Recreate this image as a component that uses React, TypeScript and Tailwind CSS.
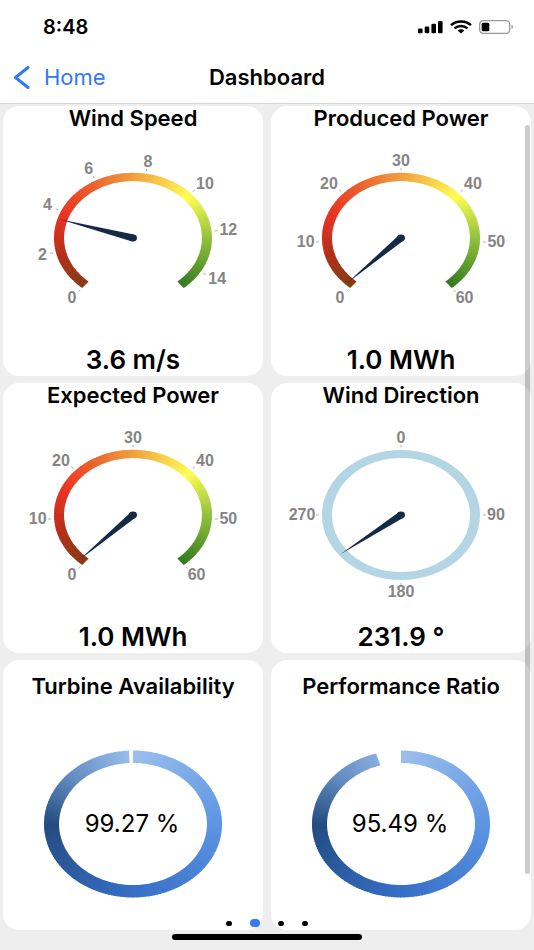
import React, { useState } from "react";

type Stop = [number, string];

// Dials are slightly wider than they are tall
const SQUASH = 0.825;

const windStops: Stop[] = [
  [0, "#863c14"],
  [0.12, "#b32f1a"],
  [0.26, "#ea3323"],
  [0.38, "#ec5f2c"],
  [0.5, "#f09f3e"],
  [0.67, "#fffe54"],
  [0.82, "#92c23c"],
  [1, "#32791f"],
];

const donutStops: Stop[] = [
  [0, "#9bbfee"],
  [0.25, "#5c95e2"],
  [0.5, "#366fc6"],
  [0.75, "#234c80"],
  [0.87, "#648dc2"],
  [1, "#9bbfee"],
];

const toRad = (deg: number) => (deg * Math.PI) / 180;

const point = (cx: number, cy: number, r: number, deg: number) => {
  const a = toRad(deg);
  return [cx + r * Math.sin(a), cy - r * Math.cos(a) * SQUASH];
};

const mix = (stops: Stop[], t: number) => {
  let i = 1;
  while (i < stops.length - 1 && stops[i][0] < t) i++;
  const [t0, c0] = stops[i - 1];
  const [t1, c1] = stops[i];
  const k = Math.min(1, Math.max(0, (t - t0) / (t1 - t0)));
  const channel = (c: string, n: number) => parseInt(c.slice(1 + n * 2, 3 + n * 2), 16);
  const rgb = [0, 1, 2].map((n) => Math.round(channel(c0, n) + (channel(c1, n) - channel(c0, n)) * k));
  return `rgb(${rgb.join(",")})`;
};

const slice = (cx: number, cy: number, inner: number, outer: number, from: number, to: number) => {
  const pts = [
    point(cx, cy, outer, from),
    point(cx, cy, outer, to),
    point(cx, cy, inner, to),
    point(cx, cy, inner, from),
  ];
  return `M${pts.map((p) => p.map((n) => n.toFixed(2)).join(" ")).join("L")}Z`;
};

type BandProps = {
  cx: number;
  cy: number;
  inner: number;
  outer: number;
  from: number;
  to: number;
  stops: Stop[];
  span: number;
};

// Arc built from thin slices so the colour can follow the angle
function Band({ cx, cy, inner, outer, from, to, stops, span }: BandProps) {
  const count = Math.ceil((to - from) / 2);
  const step = (to - from) / count;
  return (
    <g>
      {Array.from({ length: count }, (_, i) => {
        const a = from + i * step;
        const b = Math.min(to, a + step + 0.6);
        return (
          <path key={i} d={slice(cx, cy, inner, outer, a, b)} fill={mix(stops, (a + step / 2 - from) / span)} />
        );
      })}
    </g>
  );
}

type GaugeProps = {
  title: string;
  value: number;
  unit: string;
  max: number;
  ticks: number[];
  compass?: boolean;
};

function GaugeCard({ title, value, unit, max, ticks, compass }: GaugeProps) {
  const cx = 130;
  const cy = 108;
  const start = compass ? 0 : -140;
  const sweep = compass ? 360 : 280;
  const angle = (v: number) => start + (v / max) * sweep;

  const needle = angle(value);
  const [tx, ty] = point(cx, cy, 77, needle);
  const len = Math.hypot(tx - cx, ty - cy);
  const nx = (-(ty - cy) / len) * 3.5;
  const ny = ((tx - cx) / len) * 3.5;

  return (
    <section className="overflow-hidden rounded-2xl bg-white text-center">
      <h2 className="text-[22px] leading-6 font-semibold whitespace-nowrap">{title}</h2>
      <svg viewBox="0 0 260 214" className="block w-full" role="img" aria-label={title}>
        {compass ? (
          <path
            d="M51 108a79 65 0 1 0 158 0a79 65 0 1 0-158 0ZM61 108a69 57 0 1 0 138 0a69 57 0 1 0-138 0Z"
            fill="#b4d6e4"
            fillRule="evenodd"
          />
        ) : (
          <Band cx={cx} cy={cy} inner={69} outer={79} from={-140} to={140} stops={windStops} span={280} />
        )}
        {ticks.map((t) => {
          const a = angle(t);
          const [x1, y1] = point(cx, cy, 82, a);
          const [x2, y2] = point(cx, cy, 85, a);
          // diagonal labels need a little more room than the ones on the axes
          const corner = 4 * Math.abs(Math.sin(toRad(2 * a)));
          const [lx] = point(cx, cy, 87 + corner + String(t).length * 4, a);
          const [, ly] = point(cx, cy, 93 + corner / 2, a);
          return (
            <g key={t}>
              <line x1={x1} y1={y1} x2={x2} y2={y2} stroke="#b0b0b0" strokeWidth="1" />
              <text
                x={lx}
                y={ly + 5}
                textAnchor="middle"
                fill="#858585"
                className="font-['Liberation_Sans',sans-serif] text-base font-bold"
              >
                {t}
              </text>
            </g>
          );
        })}
        <path d={`M${cx + nx} ${cy + ny}L${tx} ${ty}L${cx - nx} ${cy - ny}Z`} fill="#142a47" />
        <ellipse cx={cx} cy={cy} rx="4" ry="3.4" fill="#142a47" />
      </svg>
      <p className="text-[26px] leading-8 font-semibold whitespace-nowrap">
        {value.toFixed(1)} {unit}
      </p>
    </section>
  );
}

function DonutCard({ title, value }: { title: string; value: number }) {
  return (
    <section className="overflow-hidden rounded-2xl bg-white pt-[14px] text-center">
      <h2 className="text-[22px] leading-6 font-semibold whitespace-nowrap">{title}</h2>
      <svg viewBox="0 0 260 232" className="block w-full" role="img" aria-label={title}>
        <Band cx={130} cy={126} inner={74} outer={89} from={0} to={value * 3.6} stops={donutStops} span={360} />
        <text x="129" y="134" textAnchor="middle" className="text-2xl">
          {value.toFixed(2)} %
        </text>
      </svg>
    </section>
  );
}

function StatusBar() {
  return (
    <div className="flex h-[54px] items-center justify-between pr-5 pl-[43px]">
      <span className="text-xl font-semibold">8:48</span>
      <div className="flex items-center gap-[7px]">
        <svg width="25" height="14" viewBox="0 0 25 14">
          <rect x="0" y="8.5" width="4.6" height="4.8" rx="1.2" />
          <rect x="6.7" y="6.5" width="4.6" height="6.8" rx="1.2" />
          <rect x="13.4" y="3.8" width="4.6" height="9.5" rx="1.2" />
          <rect x="20" y="1" width="4.6" height="12.3" rx="1.2" />
        </svg>
        <svg width="22" height="14" viewBox="0 0 22 14" fill="none" stroke="#000" strokeWidth="2.4">
          <path d="M1 5.2C6.5 0.2 15.5 0.2 21 5.2" />
          <path d="M4.5 8.3C8.2 5.2 13.8 5.2 17.5 8.3" />
          <path d="M7.6 10.4C9.5 8.7 12.5 8.7 14.4 10.4L11 13.5Z" fill="#000" stroke="none" />
        </svg>
        <svg width="35" height="14" viewBox="0 0 35 14">
          <rect x="0.7" y="0.7" width="30" height="12.6" rx="3.6" fill="none" stroke="#9a9a9a" strokeWidth="1.3" />
          <rect x="2.7" y="2.7" width="7.6" height="8.6" rx="1.5" />
          <path d="M32.5 4.8C34.5 5.5 34.5 8.5 32.5 9.2Z" fill="#9a9a9a" />
        </svg>
      </div>
    </div>
  );
}

const powerTicks = [0, 10, 20, 30, 40, 50, 60];

export default function App() {
  const [page, setPage] = useState(1);

  return (
    <div className="relative min-h-screen bg-[#eeeeee] font-['Inter',sans-serif] text-black">
      {/* ====== Header ====== */}
      <header className="border-b border-[#d4d4d4] bg-white">
        <StatusBar />
        <nav className="grid h-[49px] grid-cols-3 items-center pb-[2px]">
          <button type="button" className="flex items-center gap-[14px] pl-[13px] text-[22px] text-[#3478f6]">
            <svg width="17" height="23" viewBox="0 0 17 23" fill="none" stroke="currentColor" strokeWidth="3">
              <path d="M15 1.5L2.5 11.5L15 21.5" strokeLinecap="round" strokeLinejoin="round" />
            </svg>
            Home
          </button>
          <h1 className="text-center text-[22px] font-semibold">Dashboard</h1>
        </nav>
      </header>

      {/* ====== Cards ====== */}
      <main className="grid grid-cols-2 gap-x-2 gap-y-[7px] px-[3px] pt-[2px] pb-5">
        <GaugeCard title="Wind Speed" value={3.6} unit="m/s" max={15} ticks={[0, 2, 4, 6, 8, 10, 12, 14]} />
        <GaugeCard title="Produced Power" value={1} unit="MWh" max={60} ticks={powerTicks} />
        <GaugeCard title="Expected Power" value={1} unit="MWh" max={60} ticks={powerTicks} />
        <GaugeCard title="Wind Direction" value={231.9} unit="°" max={360} ticks={[0, 90, 180, 270]} compass />
        <DonutCard title="Turbine Availability" value={99.27} />
        <DonutCard title="Performance Ratio" value={95.49} />
      </main>

      {/* Scroll indicator */}
      <div className="absolute top-[125px] right-1 bottom-[76px] w-[5px] rounded-full bg-black/20" />

      {/* ====== Pager ====== */}
      <div className="absolute inset-x-0 bottom-[22px] flex h-[10px] items-center justify-center gap-[18px]">
        {[0, 1, 2, 3].map((i) => (
          <button
            key={i}
            type="button"
            aria-label={`Page ${i + 1}`}
            onClick={() => setPage(i)}
            className={i === page ? "h-2 w-[10px] rounded-full bg-[#3478f6]" : "h-[5px] w-[6px] rounded-full bg-black"}
          />
        ))}
      </div>
      <div className="absolute inset-x-0 bottom-[10px] mx-auto h-[6px] w-[190px] rounded-full bg-black" />
    </div>
  );
}
